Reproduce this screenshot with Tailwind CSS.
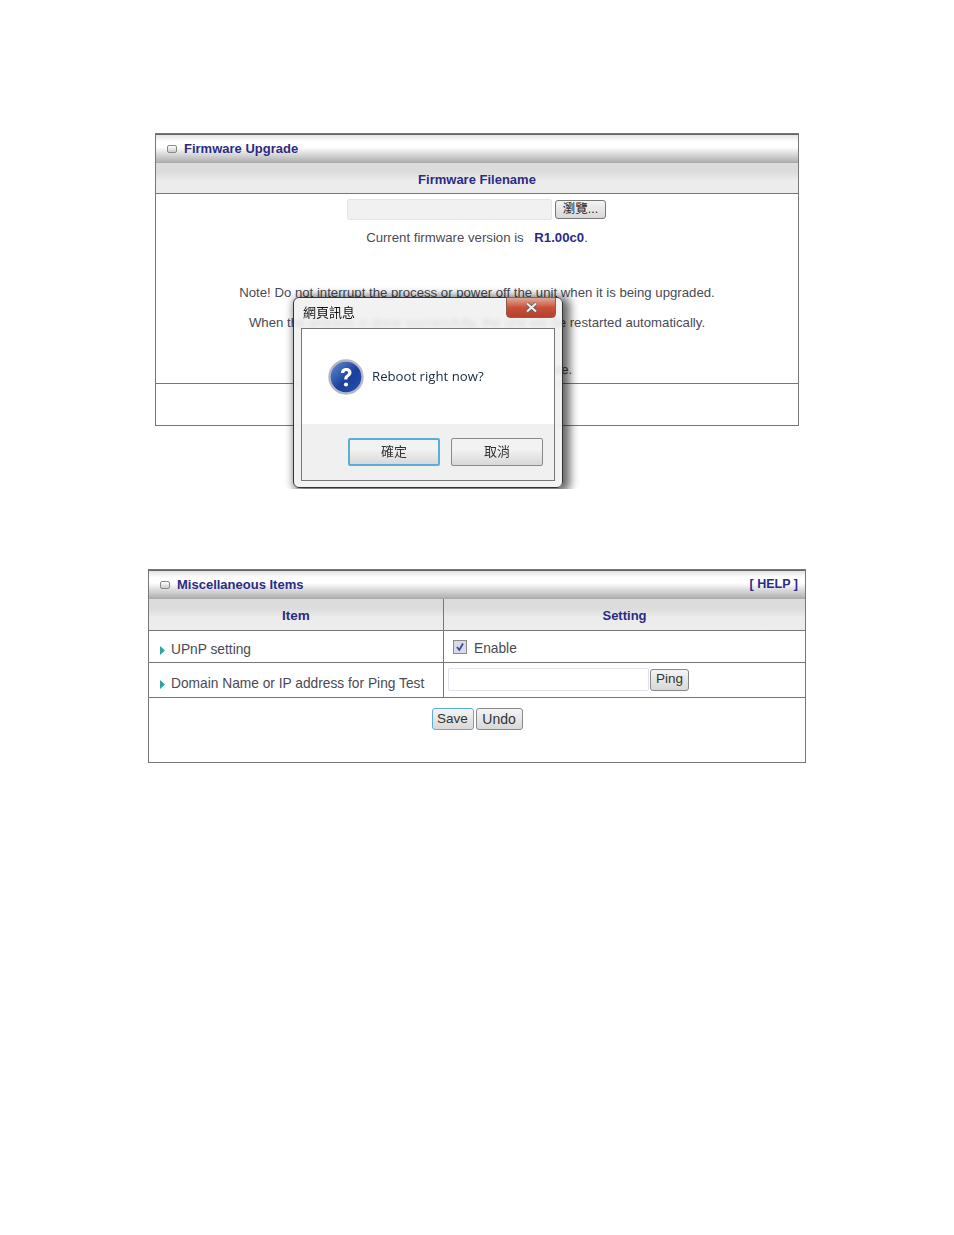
<!DOCTYPE html>
<html lang="en">
  <head>
    <meta charset="UTF-8" />
    <title>Firmware Upgrade</title>
    <script src="https://cdn.jsdelivr.net/npm/@tailwindcss/browser@4"></script>
  </head>
  <body class="bg-white">
    <div class="relative h-[1235px] w-[954px] overflow-hidden pt-[133px] font-['Liberation_Sans','Noto_Sans_CJK_TC',sans-serif] text-[13.2px] text-[#4a4a55]">
      <!-- firmware upgrade panel -->
      <div class="ml-[155px] h-[293px] w-[644px] border border-[#777]">
        <div class="flex h-[29px] items-center gap-[7px] border-t border-b border-t-[#666] border-b-[#aaa] bg-[linear-gradient(#e4e4e4,#fff_25%,#fff_45%,#b0b0b0)] pl-[11px]">
          <span class="h-[8px] w-[10px] rounded-[2px] border border-[#888] bg-gradient-to-b from-white to-[#ccc]"></span>
          <span class="text-[13px] font-bold text-[#2b2b86]">Firmware Upgrade</span>
        </div>
        <div class="flex h-[31px] items-center justify-center border-b border-[#777] bg-gradient-to-b from-[#dcdcdc] from-30% to-[#ececec] to-60% pt-[4px] text-[13px] font-bold text-[#2b2b86]">Firmware Filename</div>
        <div class="h-[190px] border-b border-[#777] text-center">
          <div class="flex items-center pt-[5px] pl-[191px]">
            <span class="h-[21px] w-[205px] rounded-[2px] border border-[#e4e4ea] bg-[#f1f1f1]"></span>
            <span class="ml-[3px] flex h-[19px] w-[51px] items-center justify-center rounded-[3px] border border-[#777] bg-gradient-to-b from-[#f4f4f4] to-[#d8d8d8] text-[12.5px] leading-none text-[#222]">瀏覽...</span>
          </div>
          <p class="mt-[11px] leading-[14px]">Current firmware version is <span class="ml-[7px] font-bold text-[#2b2b86]">R1.00c0</span>.</p>
          <p class="mt-[41px] leading-[14px]">Note! Do not interrupt the process or power off the unit when it is being upgraded.</p>
          <p class="mt-[16px] leading-[14px]">When the process is done successfully, the unit will be restarted automatically.</p>
          <p class="mt-[33px] ml-[8px] leading-[14px]">This process takes one minute.</p>
        </div>
      </div>

      <!-- reboot dialog, cut off at the bottom like the capture -->
      <div class="absolute top-[280px] left-[275px] h-[209px] w-[305px] overflow-hidden">
        <div class="absolute top-[17px] left-[18px] h-[191px] w-[270px] rounded-[6px] border border-[#333] bg-[#f0f0f0]/85 shadow-[4px_2px_10px_3px_rgba(0,0,0,0.6)] backdrop-blur-[2px]">
          <div class="flex h-[30px] items-start">
            <span class="mt-[7px] ml-[9px] text-[13px] leading-[16px] text-[#111]">網頁訊息</span>
            <span class="absolute -top-[1px] right-[6px] flex h-[21px] w-[50px] items-center justify-center rounded-b-[4px] border border-[#8c5a50] bg-gradient-to-b from-[#dfa898] via-[#c9503a] to-[#b5402e]">
              <svg width="13" height="11" viewBox="0 0 13 11"><path d="M2 1.5 11 9.5M11 1.5 2 9.5" stroke="#555" stroke-width="3.4" fill="none" /><path d="M2 1.5 11 9.5M11 1.5 2 9.5" stroke="#f0f0f0" stroke-width="2.2" fill="none" /></svg>
            </span>
          </div>
          <div class="mx-[7px] h-[153px] border border-[#777] bg-white">
            <div class="flex h-[95px] items-center pl-[26px]">
              <svg width="36" height="36" viewBox="0 0 36 36">
                <defs>
                  <linearGradient id="qb" x1="0" y1="0" x2="1" y2="1">
                    <stop offset="0" stop-color="#6a92dc" />
                    <stop offset="0.55" stop-color="#1a3f9c" />
                    <stop offset="1" stop-color="#2a52b0" />
                  </linearGradient>
                </defs>
                <circle cx="18" cy="18" r="16.5" fill="url(#qb)" stroke="#b4b8c4" stroke-width="2.4" />
                <path d="M13 14c0-3.2 2.3-5 5.3-5s5.2 1.8 5.2 4.5c0 2.2-1.3 3.3-2.6 4.3-1.1.8-1.5 1.4-1.5 2.7h-3.2c0-2.4.8-3.3 2.1-4.4 1.1-.8 1.8-1.4 1.8-2.5 0-1-.7-1.7-1.8-1.7-1.2 0-2 .8-2.1 2.1z" fill="#fff" />
                <circle cx="18" cy="25.5" r="2.1" fill="#fff" />
              </svg>
              <span class="ml-[8px] font-['Open_Sans',sans-serif] text-[13.2px] text-[#1a2a3a]">Reboot right now?</span>
            </div>
            <div class="flex h-[56px] gap-[11px] bg-[#f0f0f0] pt-[14px] pl-[46px]">
              <span class="flex h-[28px] w-[92px] items-center justify-center rounded-[2px] border-2 border-[#5aaed4] bg-gradient-to-b from-[#f2f2f2] from-40% to-[#d8d8d8] text-[13px] text-[#333]">確定</span>
              <span class="flex h-[28px] w-[92px] items-center justify-center rounded-[2px] border border-[#8a8a8a] bg-gradient-to-b from-[#f2f2f2] from-40% to-[#d8d8d8] text-[13px] text-[#333]">取消</span>
            </div>
          </div>
        </div>
      </div>

      <!-- miscellaneous items panel -->
      <div class="mt-[143px] ml-[148px] h-[194px] w-[658px] border border-[#777]">
        <div class="flex h-[29px] items-center gap-[7px] border-t border-b border-t-[#666] border-b-[#aaa] bg-[linear-gradient(#e4e4e4,#fff_25%,#fff_45%,#b0b0b0)] pr-[7px] pl-[11px] text-[13px]">
          <span class="h-[8px] w-[10px] rounded-[2px] border border-[#888] bg-gradient-to-b from-white to-[#ccc]"></span>
          <span class="font-bold text-[#2b2b86]">Miscellaneous Items</span>
          <span class="ml-auto text-[12.5px] font-bold text-[#2b2b86]">[ HELP ]</span>
        </div>
        <div class="grid grid-cols-[295px_1fr] text-[13.75px]">
          <div class="flex h-[32px] items-center justify-center border-r border-b border-[#777] bg-gradient-to-b from-[#dcdcdc] from-30% to-[#ececec] to-60% pt-[4px] text-[13.5px] font-bold text-[#2b2b86]">Item</div>
          <div class="flex h-[32px] items-center justify-center border-b border-[#777] bg-gradient-to-b from-[#dcdcdc] from-30% to-[#ececec] to-60% pt-[2px] text-[13px] font-bold text-[#2b2b86]">Setting</div>
          <div class="flex h-[32px] items-center gap-[6px] border-r border-b border-[#777] pt-[8px] pl-[11px]">
            <svg width="5" height="9" viewBox="0 0 5 9"><path d="M0 0 5 4.5 0 9z" fill="#2aa5a0" /></svg>
            <span>UPnP setting</span>
          </div>
          <div class="flex h-[32px] items-center gap-[7px] border-b border-[#777] pl-[9px]">
            <span class="flex h-[14px] w-[14px] items-center justify-center border border-[#8a8a8a] bg-[#d8dbe6]">
              <svg width="10" height="10" viewBox="0 0 10 10"><path d="M2 5 4.3 8 8 1.5" stroke="#3a4a9c" stroke-width="1.8" fill="none" /></svg>
            </span>
            <span class="pt-[6px]">Enable</span>
          </div>
          <div class="flex h-[35px] items-center gap-[6px] border-r border-b border-[#777] pt-[8px] pl-[11px]">
            <svg width="5" height="9" viewBox="0 0 5 9"><path d="M0 0 5 4.5 0 9z" fill="#2aa5a0" /></svg>
            <span>Domain Name or IP address for Ping Test</span>
          </div>
          <div class="flex h-[35px] items-center border-b border-[#777] pb-[1px] pl-[4px]">
            <span class="h-[23px] w-[201px] rounded-[2px] border border-[#dfe2ee] bg-white"></span>
            <span class="ml-[1px] flex h-[22px] w-[39px] items-center justify-center rounded-[3px] border border-[#888] bg-gradient-to-b from-[#f4f4f4] to-[#d8d8d8] text-[13.5px] text-[#333]">Ping</span>
          </div>
        </div>
        <div class="flex justify-center gap-[2px] pt-[10px]">
          <span class="flex h-[22px] w-[42px] items-center justify-center rounded-[3px] border-[1.5px] border-[#5aaed4] bg-gradient-to-b from-[#f4f4f4] to-[#d8d8d8] pt-[1px] text-[13.5px] text-[#333]">Save</span>
          <span class="flex h-[22px] w-[47px] items-center justify-center rounded-[3px] border border-[#888] bg-gradient-to-b from-[#f4f4f4] to-[#d8d8d8] text-[14px] text-[#333]">Undo</span>
        </div>
      </div>
    </div>
  </body>
</html>
